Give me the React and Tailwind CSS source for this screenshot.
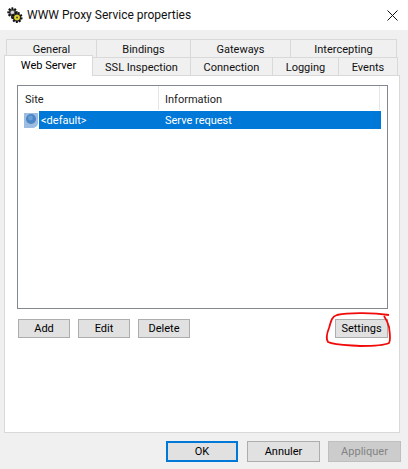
const font = "font-['Roboto',sans-serif]";

function GearIcon() {
  return (
    <svg width="16" height="17" viewBox="0 0 16 17" className="shrink-0">
      <circle cx="5.5" cy="5.5" r="4" fill="#555" stroke="#111" strokeWidth="2.4" strokeDasharray="1.7 1.2" />
      <circle cx="5.5" cy="5.5" r="1.7" fill="#ddd" />
      <circle cx="10" cy="10.5" r="4.4" fill="#444" stroke="#111" strokeWidth="2.4" strokeDasharray="1.8 1.2" />
      <circle cx="10" cy="10.5" r="2.8" fill="#e8d820" />
      <circle cx="10" cy="10.5" r="1.1" fill="#555" />
    </svg>
  );
}

function SiteIcon() {
  return (
    <svg width="14" height="17" viewBox="0 0 14 17" className="shrink-0">
      <path d="M0 1h14v10c0 3-3 5-6 5H0z" fill="#9dbde0" />
      <circle cx="7" cy="7" r="5" fill="#4a86c6" />
      <circle cx="6.5" cy="6" r="2.4" fill="#6a9fd6" />
    </svg>
  );
}

function Tab({ label, width, active }) {
  if (active) {
    return (
      <div
        className={`${width} h-[21px] -mt-[2px] pb-px relative z-10 bg-white border border-b-0 border-[#d9d9d9] flex items-center justify-center text-black`}
      >
        {label}
      </div>
    );
  }
  return (
    <div className={`${width} h-[18px] pt-px -ml-px first:ml-0 bg-[#f0f0f0] border border-b-0 border-[#d9d9d9] flex items-center justify-center text-[#111]`}>
      {label}
    </div>
  );
}

function Btn({ label, width, className = '' }) {
  return (
    <button className={`${width} h-[19px] bg-[#e1e1e1] border border-[#adadad] flex items-center justify-center text-black ${className}`}>
      {label}
    </button>
  );
}

function FooterBtn({ label, className }) {
  return <button className={`h-[21px] flex items-center justify-center ${className}`}>{label}</button>;
}

export default function App() {
  return (
    <div className={`${font} relative w-[408px] h-[469px] bg-[#f0f0f0] text-[11px] leading-none overflow-hidden flex flex-col`}>
      <header className="h-[30px] bg-white flex items-center pl-[7px] pr-[10px]">
        <GearIcon />
        <span className="ml-[4px] text-[12px] text-[#111]">WWW Proxy Service properties</span>
        <svg width="11" height="11" viewBox="0 0 11 11" className="ml-auto">
          <path d="M0.5 0.5l10 10M10.5 0.5l-10 10" stroke="#111" strokeWidth="1" fill="none" />
        </svg>
      </header>

      <div className="pt-[9px] pl-[6px] flex">
        <Tab label="General" width="w-[91px]" />
        <Tab label="Bindings" width="w-[95px]" />
        <Tab label="Gateways" width="w-[101px]" />
        <Tab label="Intercepting" width="w-[107px]" />
      </div>

      <div className="pl-[4px] flex">
        <Tab label="Web Server" width="w-[89px]" active />
        <Tab label="SSL Inspection" width="w-[99px]" />
        <Tab label="Connection" width="w-[83px]" />
        <Tab label="Logging" width="w-[67px]" />
        <Tab label="Events" width="w-[60px]" />
      </div>

      <section className="-mt-[1px] mx-[4px] w-[396px] h-[358px] bg-white border border-[#d9d9d9] pl-[12px] pr-[11px] pt-[9px] flex flex-col">
        <div className="h-[224px] border border-[#828790] flex flex-col">
          <div className="h-[24px] flex items-center text-[#222]">
            <div className="w-[141px] h-full pl-[7px] pt-[2px] flex items-center border-r border-[#e5e5e5]">Site</div>
            <div className="w-[221px] h-full pl-[6px] pt-[2px] flex items-center border-r border-[#e5e5e5]">Information</div>
          </div>
          <div className="h-[18px] mt-px flex">
            <div className="w-[21px] pl-[6px] flex items-center"><SiteIcon /></div>
            <div className="w-[342px] bg-[#0078d7] text-white flex items-center">
              <span className="w-[120px] pl-[2px]">&lt;default&gt;</span>
              <span className="pl-[6px]">Serve request</span>
            </div>
          </div>
        </div>
        <div className="mt-[10px] flex pl-px">
          <Btn label="Add" width="w-[52px]" />
          <Btn label="Edit" width="w-[52px]" className="ml-[8px]" />
          <Btn label="Delete" width="w-[52px]" className="ml-[8px]" />
          <Btn label="Settings" width="w-[53px]" className="ml-auto" />
        </div>
      </section>

      <footer className="mt-[8px] pl-[166px] flex">
        <FooterBtn label="OK" className="w-[72px] bg-[#e1e1e1] border-2 border-[#0078d7] text-black" />
        <FooterBtn label="Annuler" className="w-[73px] ml-[9px] bg-[#e1e1e1] border border-[#adadad] text-black" />
        <FooterBtn label="Appliquer" className="w-[73px] ml-[8px] bg-[#cccccc] border border-[#bfbfbf] text-[#838383]" />
      </footer>

      {/* hand drawn red circle over the screenshot */}
      <svg width="408" height="469" viewBox="0 0 408 469" className="absolute inset-0 pointer-events-none">
        <path
          d="M389 315 C375 313 350 312 337 315 C331 317 331 322 329 328 C327 333 326 339 328 342 C334 345 345 345 360 346 C372 346 385 345 389 343 C391 340 390 334 389 327 C388 322 386 319 384 316"
          fill="none"
          stroke="#f00a0a"
          strokeWidth="1.8"
        />
      </svg>
    </div>
  );
}
